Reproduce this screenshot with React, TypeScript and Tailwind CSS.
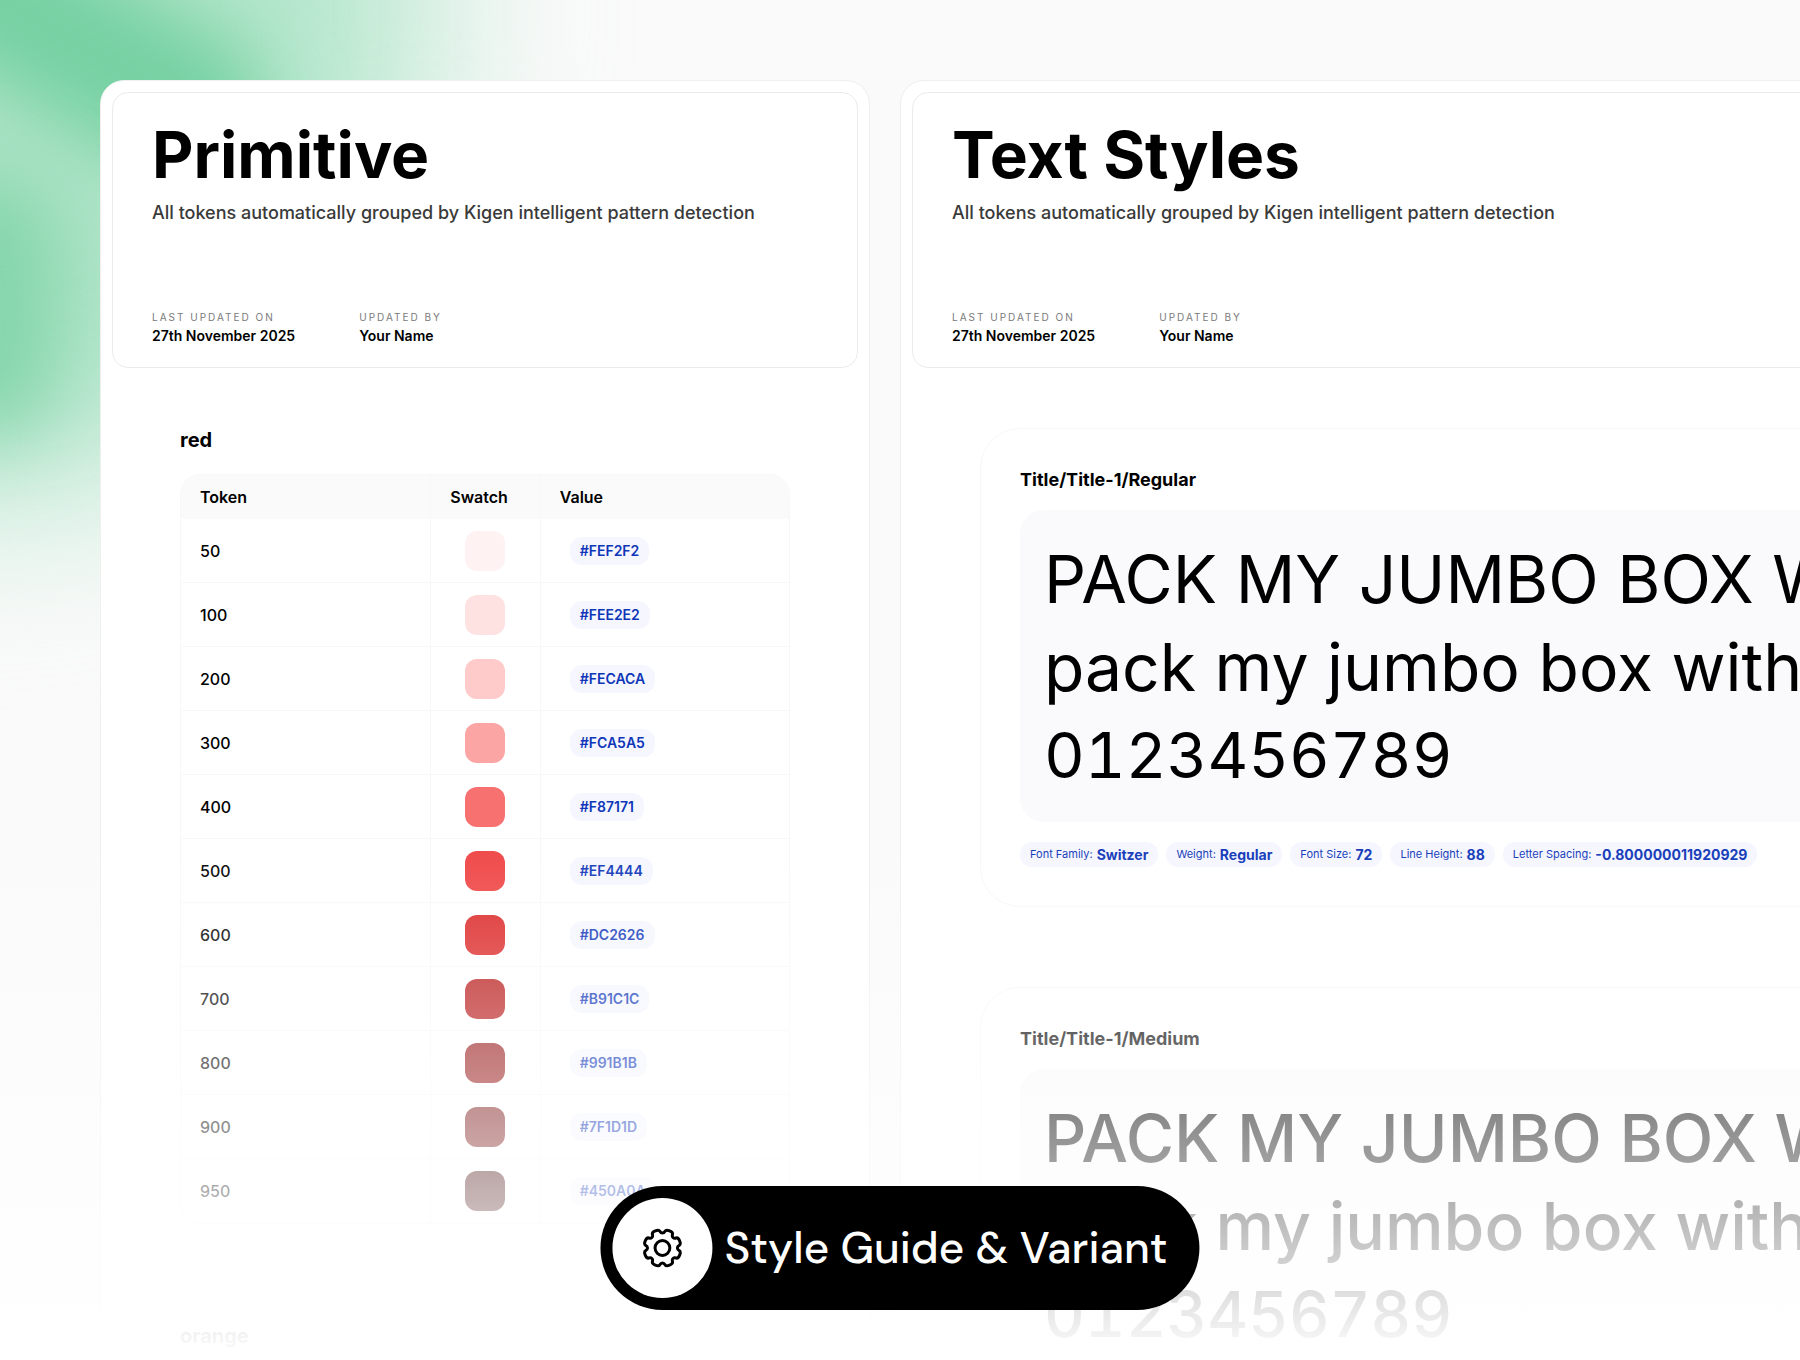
import type { ReactNode } from "react"

const redTokens = [
  { name: "50", value: "#FEF2F2" },
  { name: "100", value: "#FEE2E2" },
  { name: "200", value: "#FECACA" },
  { name: "300", value: "#FCA5A5" },
  { name: "400", value: "#F87171" },
  { name: "500", value: "#EF4444" },
  { name: "600", value: "#DC2626" },
  { name: "700", value: "#B91C1C" },
  { name: "800", value: "#991B1B" },
  { name: "900", value: "#7F1D1D" },
  { name: "950", value: "#450A0A" },
]

const colorGroups = [
  { name: "red", tokens: redTokens },
  { name: "orange", tokens: [] },
]

const textStyles = [
  { name: "Title/Title-1/Regular", weight: "Regular", className: "font-normal" },
  { name: "Title/Title-1/Medium", weight: "Medium", className: "font-medium" },
]

// Closed outline with eight teeth, smoothed by running quadratics between edge midpoints
function gearPath(center: number, outer: number, inner: number) {
  const points: [number, number][] = []
  for (let i = 0; i < 8; i++) {
    const base = i * 45
    for (const [offset, radius] of [
      [-6, inner],
      [6, inner],
      [11, outer],
      [34, outer],
    ]) {
      const angle = ((base + offset) * Math.PI) / 180
      points.push([center + radius * Math.sin(angle), center - radius * Math.cos(angle)])
    }
  }
  const mid = (a: [number, number], b: [number, number]) =>
    `${((a[0] + b[0]) / 2).toFixed(2)} ${((a[1] + b[1]) / 2).toFixed(2)}`
  const last = points[points.length - 1]
  return (
    `M${mid(last, points[0])}` +
    points
      .map((p, i) => `Q${p[0].toFixed(2)} ${p[1].toFixed(2)} ${mid(p, points[(i + 1) % points.length])}`)
      .join("") +
    "Z"
  )
}

function GearIcon() {
  return (
    <svg viewBox="0 0 40 40" className="h-10 w-10" fill="none" stroke="currentColor" strokeWidth="3" aria-hidden="true">
      <path d={gearPath(20, 19, 15)} strokeLinejoin="round" />
      <circle cx="20" cy="20" r="7.4" />
    </svg>
  )
}

function Glow() {
  return (
    <div className="pointer-events-none absolute inset-0 overflow-hidden" aria-hidden="true">
      <div className="absolute -top-[480px] -left-[460px] h-[980px] w-[880px] rounded-full bg-[#b0e5c9] blur-[90px]" />
      <div className="absolute -top-[30px] -left-[120px] h-[150px] w-[400px] rotate-[30deg] rounded-full bg-[#76d1a2] blur-[36px]" />
      <div className="absolute top-[170px] -left-[90px] h-[270px] w-[150px] rounded-full bg-[#84d5ab] blur-[40px]" />
    </div>
  )
}

function Panel({ title, className, children }: { title: string; className: string; children: ReactNode }) {
  return (
    <section className={`relative shrink-0 rounded-t-3xl border border-[#efefef] bg-white p-[11px] ${className}`}>
      <header className="flex min-h-[276px] flex-col justify-between rounded-2xl border border-[#ebebeb] px-[39px] pt-[30px] pb-[21px]">
        <div>
          <h1 className="text-[64px] leading-none font-bold">{title}</h1>
          <p className="mt-3 text-[18px] leading-7 font-medium text-[#3a3a3a]">
            All tokens automatically grouped by Kigen intelligent pattern detection
          </p>
        </div>
        <dl className="flex gap-16">
          <div>
            <dt className="text-[10px] leading-[18px] tracking-[2px] text-[#7a7a7a]">LAST UPDATED ON</dt>
            <dd className="text-sm font-semibold">27th November 2025</dd>
          </div>
          <div>
            <dt className="text-[10px] leading-[18px] tracking-[2px] text-[#7a7a7a]">UPDATED BY</dt>
            <dd className="text-sm font-semibold">Your Name</dd>
          </div>
        </dl>
      </header>
      {children}
    </section>
  )
}

function TokenTable({ tokens }: { tokens: { name: string; value: string }[] }) {
  return (
    <table className="mt-[22px] w-full table-fixed border-separate border-spacing-0 overflow-hidden rounded-[20px] border border-[#f7f7f7] text-left">
      <thead>
        <tr className="h-11 bg-[#fafafa]">
          <th className="w-[41%] px-[19px] font-semibold">Token</th>
          <th className="w-[18%] border-l border-[#f7f7f7] px-[19px] font-semibold">Swatch</th>
          <th className="border-l border-[#f7f7f7] px-[19px] font-semibold">Value</th>
        </tr>
      </thead>
      <tbody>
        {tokens.map((token) => (
          <tr key={token.name} className="h-16">
            <td className="border-b border-[#f7f7f7] px-[19px] font-medium">{token.name}</td>
            <td className="border-b border-l border-[#f7f7f7]">
              <div className="mx-auto h-10 w-10 rounded-xl" style={{ backgroundColor: token.value }} />
            </td>
            <td className="border-b border-l border-[#f7f7f7] px-[29px]">
              <span className="inline-block rounded-xl bg-[#f5f6fe] px-2.5 py-1 text-sm font-semibold text-[#0f36b8]">
                {token.value}
              </span>
            </td>
          </tr>
        ))}
      </tbody>
    </table>
  )
}

function Chip({ label, value }: { label: string; value: string }) {
  return (
    <li className="flex h-[25px] items-center gap-1 rounded-xl bg-[#f5f6fe] px-2.5 text-[#0f36b8]">
      <span className="text-[11px]">{label}:</span>
      <span className="text-sm font-bold">{value}</span>
    </li>
  )
}

function StyleCard({ name, weight, className }: { name: string; weight: string; className: string }) {
  return (
    <article className="rounded-[40px] border border-[#f7f7f7] p-[39px]">
      <h2 className="text-[18px] leading-6 font-bold">{name}</h2>
      <div
        className={`mt-[18px] overflow-hidden rounded-3xl bg-[#fafafc] px-6 pt-[25px] pb-[23px] text-[66px] leading-[88px] whitespace-nowrap ${className}`}
      >
        <p>PACK MY JUMBO BOX WITH</p>
        <p>pack my jumbo box with</p>
        <p className="text-[63px] leading-[88px] tabular-nums">0123456789</p>
      </div>
      <ul className="mt-5 flex gap-2">
        <Chip label="Font Family" value="Switzer" />
        <Chip label="Weight" value={weight} />
        <Chip label="Font Size" value="72" />
        <Chip label="Line Height" value="88" />
        <Chip label="Letter Spacing" value="-0.800000011920929" />
      </ul>
    </article>
  )
}

export default function App() {
  return (
    <main className="relative h-screen overflow-hidden bg-[#fafafa] pt-20 pl-25 font-['Inter',sans-serif] text-black">
      <Glow />
      <div className="flex min-h-full items-stretch gap-[30px]">
        <Panel title="Primitive" className="w-[770px]">
          <div className="flex flex-col gap-25 px-[68px] pt-15">
            {colorGroups.map((group) => (
              <section key={group.name}>
                <h2 className="text-[20px] leading-6 font-bold">{group.name}</h2>
                {group.tokens.length > 0 && <TokenTable tokens={group.tokens} />}
              </section>
            ))}
          </div>
        </Panel>
        <Panel title="Text Styles" className="w-full">
          <div className="flex flex-col gap-20 px-[68px] pt-15">
            {textStyles.map((style) => (
              <StyleCard key={style.name} {...style} />
            ))}
          </div>
        </Panel>
      </div>

      <div className="pointer-events-none absolute inset-x-0 bottom-0 h-[39%] bg-linear-to-b from-white/0 to-white" />

      <div className="absolute bottom-[50px] left-1/2 flex -translate-x-1/2 items-center gap-3 rounded-full bg-black p-3 pr-8 whitespace-nowrap text-white">
        <span className="flex h-25 w-25 items-center justify-center rounded-full bg-white text-black">
          <GearIcon />
        </span>
        <span className="font-['DM_Sans','Lato',sans-serif] text-[44px] leading-none font-medium">
          Style Guide &amp; Variant
        </span>
      </div>
    </main>
  )
}
